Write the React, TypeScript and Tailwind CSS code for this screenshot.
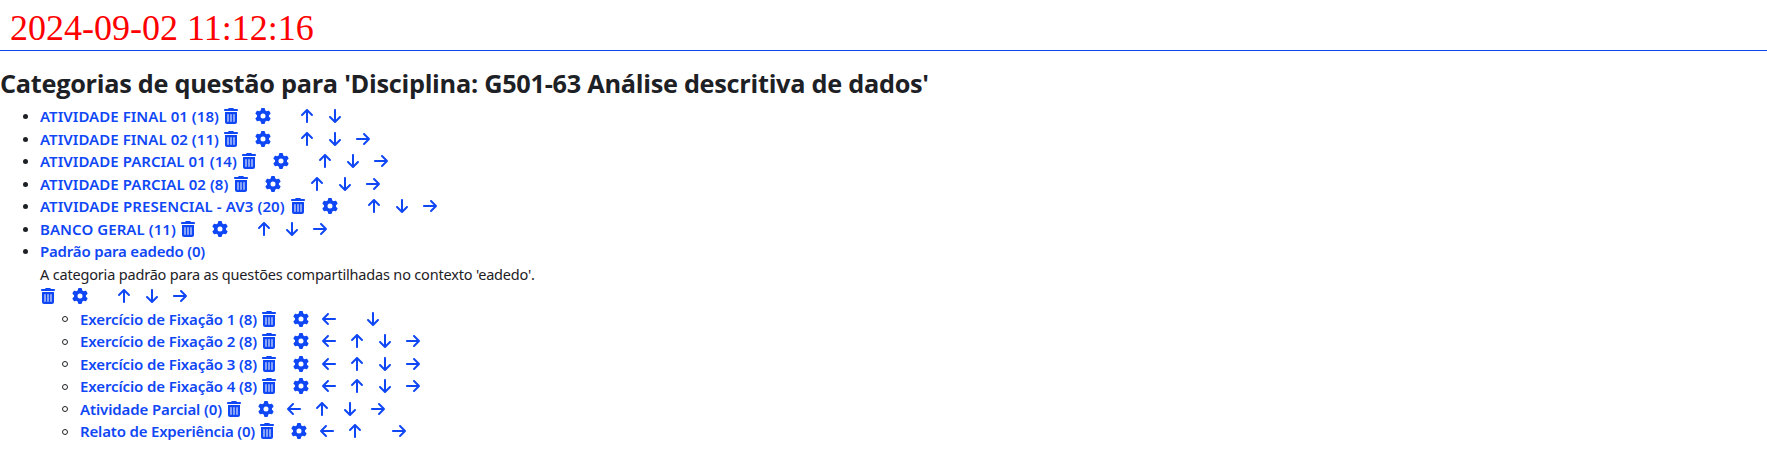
import React from 'react';
import { FaArrowDown, FaArrowLeft, FaArrowRight, FaArrowUp, FaGear, FaTrashCan } from 'react-icons/fa6';

type Category = { name: string; text: string; moves: string };

const icons = {
  l: FaArrowLeft,
  u: FaArrowUp,
  d: FaArrowDown,
  r: FaArrowRight,
};

const categories: Category[] = [
  { name: 'ATIVIDADE FINAL 01 (18)', text: 'w-[183px] tracking-[0.05px]', moves: '_ud' },
  { name: 'ATIVIDADE FINAL 02 (11)', text: 'w-[183px] tracking-[0.05px]', moves: '_udr' },
  { name: 'ATIVIDADE PARCIAL 01 (14)', text: 'w-[201.4px] tracking-[0.05px]', moves: '_udr' },
  { name: 'ATIVIDADE PARCIAL 02 (8)', text: 'w-[192.8px] tracking-[0.06px]', moves: '_udr' },
  { name: 'ATIVIDADE PRESENCIAL - AV3 (20)', text: 'w-[249.5px] tracking-[0.08px]', moves: '_udr' },
  { name: 'BANCO GERAL (11)', text: 'w-[140px] tracking-[0.07px]', moves: '_udr' },
];

const children: Category[] = [
  { name: 'Exercício de Fixação 1 (8)', text: 'w-[181.4px] tracking-[-0.115px]', moves: 'l_d' },
  { name: 'Exercício de Fixação 2 (8)', text: 'w-[181.4px] tracking-[-0.115px]', moves: 'ludr' },
  { name: 'Exercício de Fixação 3 (8)', text: 'w-[181.4px] tracking-[-0.115px]', moves: 'ludr' },
  { name: 'Exercício de Fixação 4 (8)', text: 'w-[181.4px] tracking-[-0.115px]', moves: 'ludr' },
  { name: 'Atividade Parcial (0)', text: 'w-[146.4px] tracking-[-0.11px]', moves: 'ludr' },
  { name: 'Relato de Experiência (0)', text: 'w-[179.3px] tracking-[-0.18px]', moves: 'lu_r' },
];

function Actions({ moves }: { moves: string }) {
  return (
    <span className="flex h-full items-center text-base text-[#0f47f5]">
      <span className="mr-4 flex w-4 justify-center"><FaTrashCan /></span>
      <span className="mr-3 flex w-4 justify-center"><FaGear /></span>
      {moves.split('').map((move, i) => {
        const Icon = icons[move as keyof typeof icons];
        return Icon ? (
          <span key={i} className="mr-3 flex w-4 justify-center"><Icon /></span>
        ) : (
          <span key={i} className="w-4" />
        );
      })}
    </span>
  );
}

function Row({ item, nested = false }: { item: Category; nested?: boolean }) {
  return (
    <li className="flex h-[22.5px] items-center">
      <Bullet nested={nested} />
      <a className={`shrink-0 whitespace-nowrap font-semibold text-[#0f47f5] ${item.text}`}>{item.name}</a>
      <Actions moves={item.moves} />
    </li>
  );
}

function Bullet({ nested }: { nested?: boolean }) {
  return (
    <span className="flex w-10 shrink-0 justify-end pr-3">
      <span
        className={
          nested
            ? 'mt-px size-[6px] rounded-full border border-[#1d2125]'
            : 'mt-px size-[5px] rounded-full bg-[#1d2125]'
        }
      />
    </span>
  );
}

export default function App() {
  return (
    <main className="h-[475px] overflow-hidden bg-white font-['Noto_Sans','Open_Sans',sans-serif] text-[15px] leading-[22.5px] text-[#1d2125]">
      <header className="h-[51px] border-b border-[#0f47f5] pt-2 pl-[10px] font-['Liberation_Serif',serif] text-[36px] leading-[41px] text-[#ff0000]">
        2024-09-02 11:12:16
      </header>
      <h2 className="mt-4 h-[38px] whitespace-nowrap font-['Open_Sans',sans-serif] text-[25.3px] leading-[32px] font-bold tracking-[-0.28px]">
        Categorias de questão para 'Disciplina: G501-63 Análise descritiva de dados'
      </h2>
      <ul>
        {categories.map((item) => (
          <Row key={item.name} item={item} />
        ))}
        <li>
          <div className="flex h-[22.5px] items-center">
            <Bullet />
            <a className="whitespace-nowrap font-semibold tracking-[-0.19px] text-[#0f47f5]">Padrão para eadedo (0)</a>
          </div>
          <p className="pl-10 text-[14.5px] tracking-[-0.18px]">
            A categoria padrão para as questões compartilhadas no contexto 'eadedo'.
          </p>
          <div className="h-[22.5px] pl-10">
            <Actions moves="_udr" />
          </div>
          <ul className="pl-10">
            {children.map((item) => (
              <Row key={item.name} item={item} nested />
            ))}
          </ul>
        </li>
      </ul>
    </main>
  );
}
